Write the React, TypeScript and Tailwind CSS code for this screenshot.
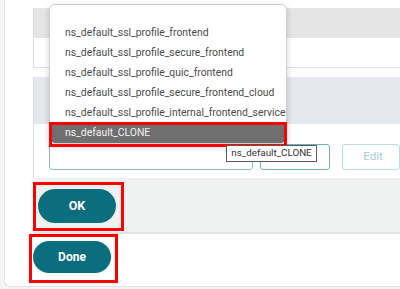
import React from "react";

const items = [
  "ns_default_ssl_profile_frontend",
  "ns_default_ssl_profile_secure_frontend",
  "ns_default_ssl_profile_quic_frontend",
  "ns_default_ssl_profile_secure_frontend_cloud",
  "ns_default_ssl_profile_internal_frontend_service",
];

export default function App() {
  return (
    <div
      className="relative w-[400px] h-[289px] overflow-hidden bg-[#f4f4f4]"
      style={{ fontFamily: "Roboto, 'Liberation Sans', sans-serif" }}
    >
      <div className="ml-[4px] h-[287px] bg-white border-l border-b border-[#e2e2e2] rounded-bl-[6px] pl-[24px] pt-[8px] flex flex-col">
        {/* panel 1 */}
        <div className="ml-[4px] h-[60px] border-l border-b border-[#dedede] flex flex-col">
          <div className="h-[30px] bg-[#e5e5e5]" />
          <div className="flex-1 bg-white" />
        </div>
        {/* panel 2 */}
        <div className="ml-[4px] mt-[9px] border-l border-[#dedede] flex flex-col">
          <div className="h-[47px] bg-[#e4e7eb]" />
          <div className="h-[54px] bg-white flex items-start pt-[20px] pl-[15px]">
            <div className="w-[204px] h-[26px] border border-[#8fbcc5] rounded-[3px] bg-white" />
            <div className="ml-[7px] w-[70px] h-[26px] border border-[#6fb0bd] rounded-[3px] bg-white" />
            <div className="ml-[12px] w-[58px] h-[26px] border border-[#b9dce2] rounded-[3px] bg-white flex items-center justify-center pl-[4px] text-[11.5px] text-[#a9c9cf]">
              Edit
            </div>
          </div>
        </div>
        {/* footer with OK */}
        <div className="ml-[4px] h-[56px] bg-[#eff0f0] border-b-2 border-[#e2e3e5] pt-[4px]">
          <div className="w-[91px] h-[49px] border-[3px] border-[#ff0000] pl-[2px] pt-[4px]">
            <div className="w-[78px] h-[34px] rounded-full bg-[#0b6e7f] flex items-center justify-center text-white text-[12.5px] font-bold">
              OK
            </div>
          </div>
        </div>
        {/* Done */}
        <div className="w-[89px] h-[49px] border-[3px] border-[#ff0000] pl-[1px] pt-[4px]">
          <div className="w-[78px] h-[32px] rounded-full bg-[#0b6e7f] flex items-center justify-center text-white text-[12px] font-bold">
            Done
          </div>
        </div>
      </div>

      {/* dropdown */}
      <div className="absolute left-[49px] top-[4px] w-[238px] h-[140px] bg-white border border-[#d0d0d0] rounded-[6px] shadow-[0_2px_6px_rgba(0,0,0,0.18)] pt-[18px] overflow-hidden">
        {items.map((t) => (
          <div key={t} className="h-[20px] pl-[15px] flex items-center text-[10.4px] text-[#4a4a4a] whitespace-nowrap">
            {t}
          </div>
        ))}
        <div className="h-[20px] pl-[15px] flex items-center text-[10.4px] text-[#f2f2f2] bg-[#6f6f6f] whitespace-nowrap">
          ns_default_CLONE
        </div>
      </div>
      {/* annotation box on selected item */}
      <div className="absolute left-[49px] top-[122px] w-[238px] h-[25px] border-[3px] border-[#ff0000]" />

      {/* tooltip */}
      <div className="absolute left-[226px] top-[145px] w-[91px] h-[17px] bg-white border border-[#5a5a5a] flex items-center justify-center text-[9.8px] text-[#333]">
        ns_default_CLONE
      </div>
    </div>
  );
}
